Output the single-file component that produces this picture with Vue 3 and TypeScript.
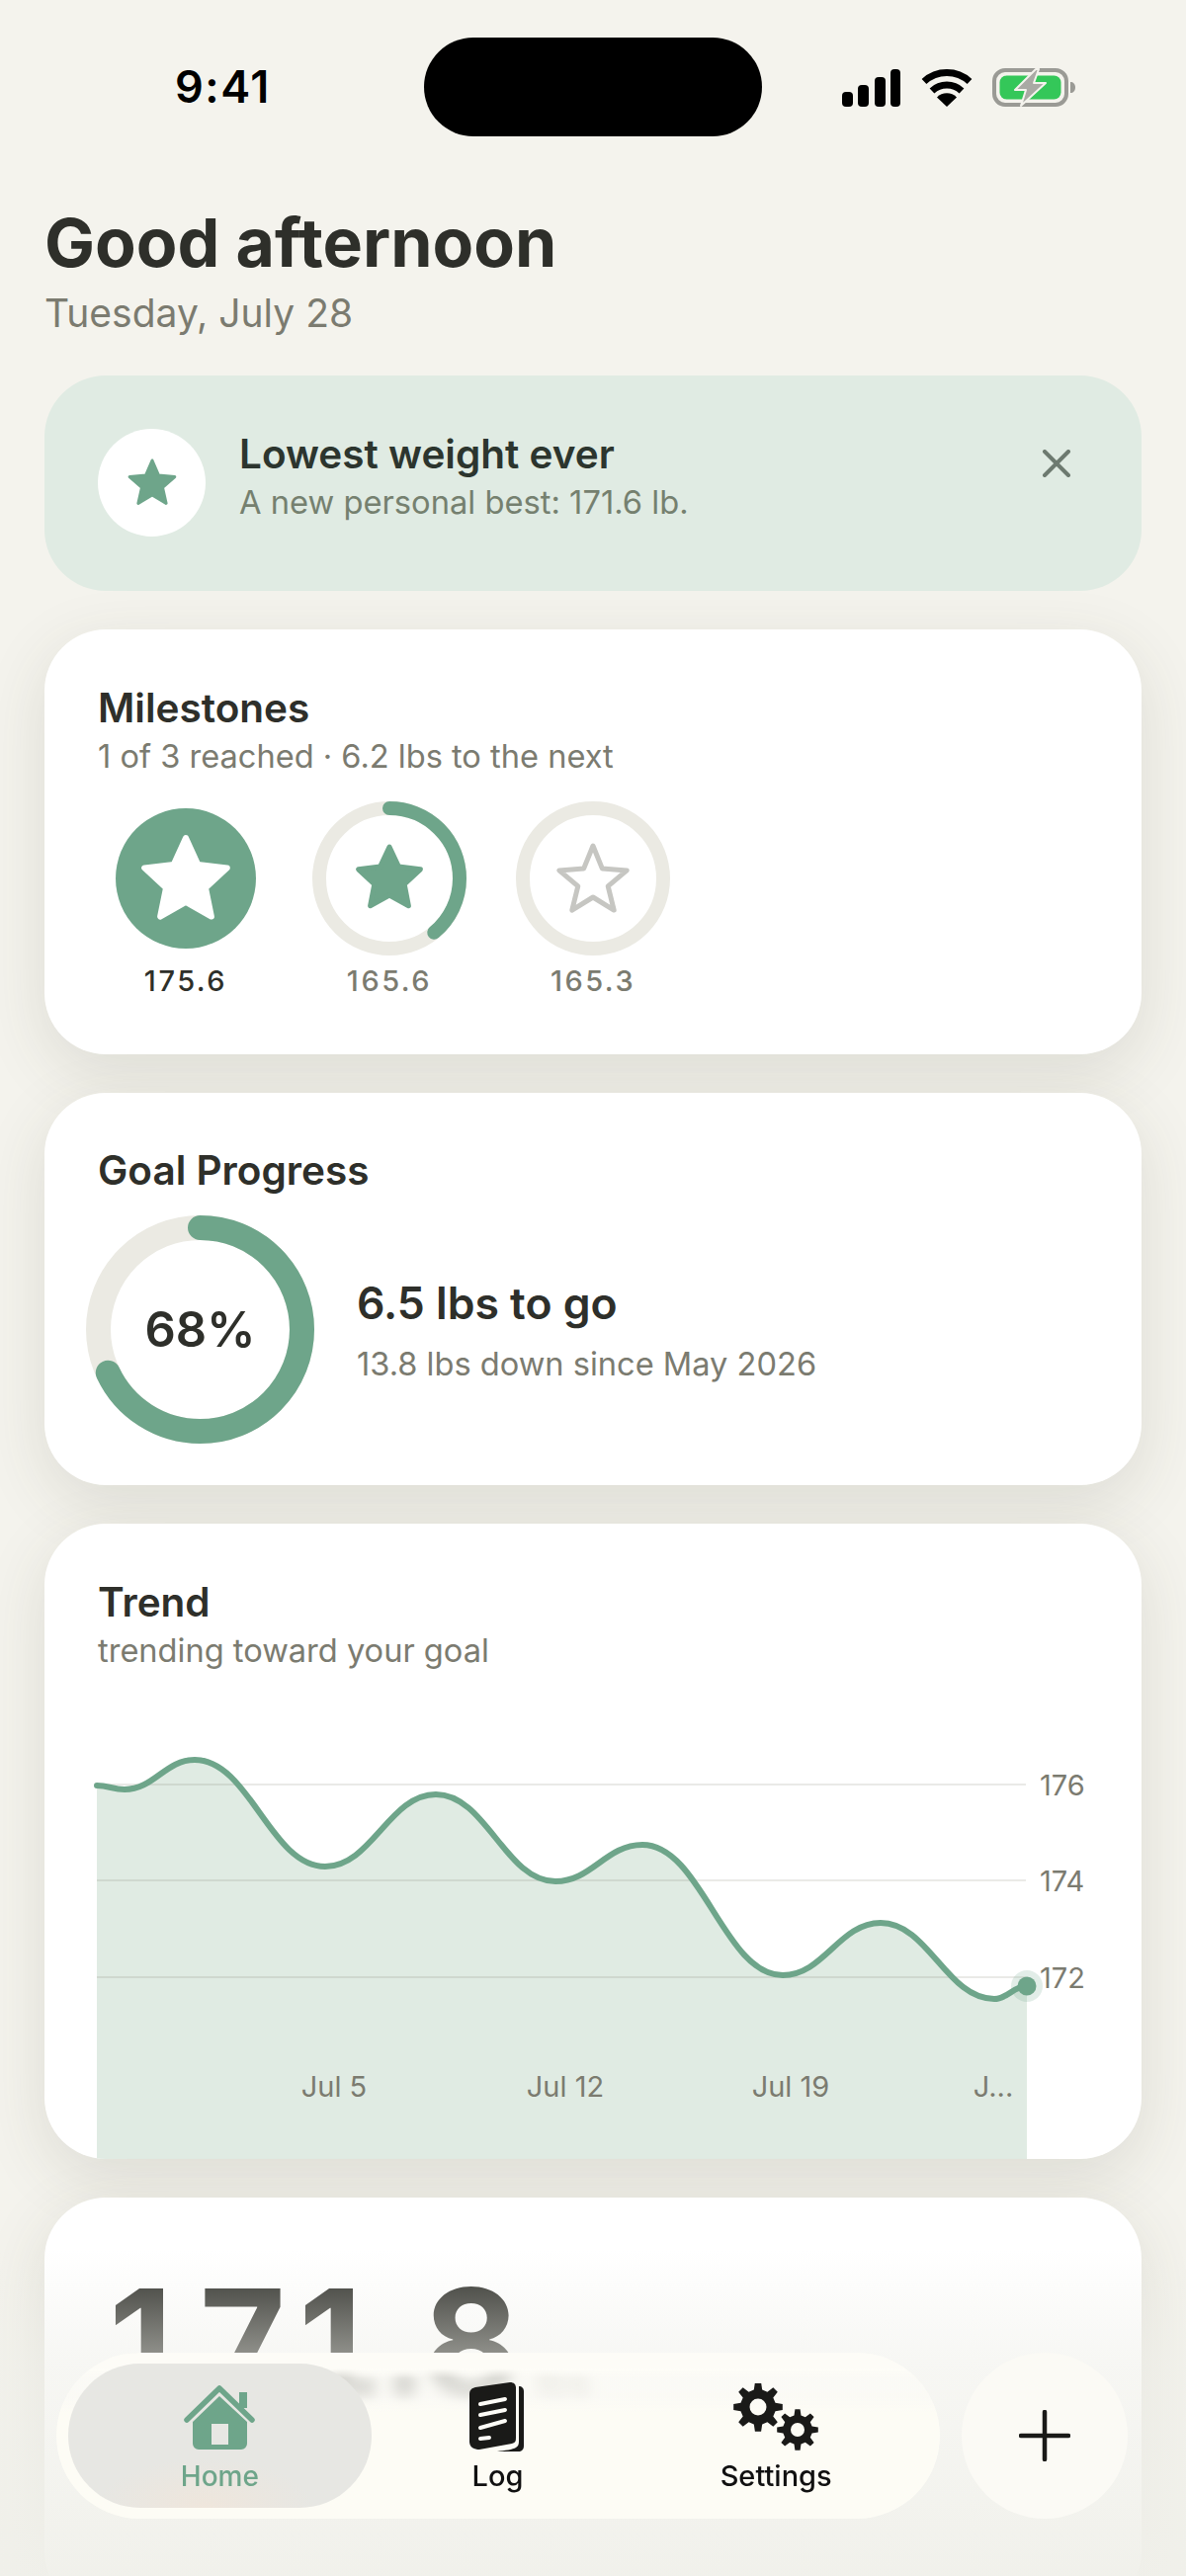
<template>
  <div class="screen">
    <div class="status">
      <span class="time">9:41</span>
      <div class="island"></div>
      <div class="status-icons">
        <svg width="60" height="39" viewBox="0 0 60 39">
          <rect x="0" y="24" width="11" height="15" rx="4" />
          <rect x="16" y="17" width="11" height="22" rx="4" />
          <rect x="33" y="9" width="11" height="30" rx="4" />
          <rect x="49" y="1" width="10" height="38" rx="4" />
        </svg>
        <svg width="52" height="39" viewBox="0 0 52 39">
          <path d="M3 13.5A34 34 0 0 1 49 13.5" fill="none" stroke="#000" stroke-width="7" />
          <path d="M11 23A22 22 0 0 1 41 23" fill="none" stroke="#000" stroke-width="7" />
          <path d="M26 39L16 29.5A14 14 0 0 1 36 29.5Z" />
        </svg>
        <svg width="84" height="39" viewBox="0 0 84 39">
          <rect x="2" y="2" width="73" height="35" rx="11" fill="none" stroke="#9a9a95" stroke-width="4" />
          <rect x="7.5" y="7.5" width="62" height="24" rx="7" fill="#34c759" />
          <path d="M79 14c3 0 5 2 5 5.500s-2 5.500-5 5.500z" fill="#9a9a95" />
          <path d="M44 1L23 22H34L29 38L54 15H42L47 1Z" fill="#a9a9a4" stroke="#f4f3ed" stroke-width="2" stroke-linejoin="round" />
        </svg>
      </div>
    </div>

    <header class="head">
      <h1>Good afternoon</h1>
      <p>Tuesday, July 28</p>
    </header>

    <main class="stack">
      <section class="banner">
        <div class="banner-icon">
          <svg width="52" height="50" viewBox="0 0 52 50">
            <polygon :points="star(26, 26, 24, 11)" fill="#6ea58a" stroke="#6ea58a" stroke-width="3" stroke-linejoin="round" />
          </svg>
        </div>
        <div class="banner-text">
          <h2>Lowest weight ever</h2>
          <p>A new personal best: 171.6 lb.</p>
        </div>
        <svg class="close" width="30" height="28" viewBox="0 0 30 28">
          <path d="M3 2L27 26M27 2L3 26" fill="none" stroke="#6d7a70" stroke-width="4" stroke-linecap="round" />
        </svg>
      </section>

      <section class="card milestones">
        <h3>Milestones</h3>
        <p class="sub">1 of 3 reached · 6.2 lbs to the next</p>
        <div class="badges">
          <div v-for="m in milestones" :key="m.label" class="badge" :class="{ done: m.state === 'done' }">
            <svg width="156" height="156" viewBox="0 0 156 156">
              <template v-if="m.state === 'done'">
                <circle cx="78" cy="78" r="71" fill="#6ea58a" />
                <polygon :points="star(78, 81, 44, 21)" fill="#fff" stroke="#fff" stroke-width="6" stroke-linejoin="round" />
              </template>
              <template v-else>
                <circle cx="78" cy="78" r="71" fill="none" stroke="#ebeae3" stroke-width="14" />
                <template v-if="m.state === 'active'">
                  <circle cx="78" cy="78" r="71" fill="none" stroke="#6ea58a" stroke-width="14" stroke-linecap="round" pathLength="100" stroke-dasharray="39 100" transform="rotate(-90 78 78)" />
                  <polygon :points="star(78, 79, 33, 16)" fill="#6ea58a" stroke="#6ea58a" stroke-width="5" stroke-linejoin="round" />
                </template>
                <polygon v-else :points="star(78, 81, 36, 16)" fill="none" stroke="#c6c6c2" stroke-width="5" stroke-linejoin="round" />
              </template>
            </svg>
            <span>{{ m.label }}</span>
          </div>
        </div>
      </section>

      <section class="card goal">
        <h3>Goal Progress</h3>
        <div class="goal-row">
          <div class="ring">
            <svg width="231" height="231" viewBox="0 0 231 231">
              <circle cx="115.500" cy="115.500" r="103" fill="none" stroke="#ebeae3" stroke-width="25" />
              <circle cx="115.500" cy="115.500" r="103" fill="none" stroke="#6ea58a" stroke-width="25" stroke-linecap="round" pathLength="100" stroke-dasharray="68 100" transform="rotate(-90 115.500 115.500)" />
            </svg>
            <span>68%</span>
          </div>
          <div class="goal-text">
            <strong>6.5 lbs to go</strong>
            <p class="sub">13.8 lbs down since May 2026</p>
          </div>
        </div>
      </section>

      <section class="card trend">
        <div class="trend-head">
          <h3>Trend</h3>
          <p class="sub">trending toward your goal</p>
        </div>
        <svg class="chart" width="1110" height="446" viewBox="45 1740 1110 446">
          <path :d="areaPath" fill="#e0ebe3" />
          <line v-for="t in yTicks" :key="t.label" x1="98" x2="1038" :y1="t.y" :y2="t.y" stroke="#6b6b55" stroke-opacity="0.14" stroke-width="2" />
          <path :d="linePath" fill="none" stroke="#6ea58a" stroke-width="6" stroke-linecap="round" />
          <circle cx="1039" cy="2011" r="16" fill="#6ea58a" fill-opacity="0.2" />
          <circle cx="1039" cy="2011" r="9.500" fill="#6ea58a" />
          <text v-for="t in yTicks" :key="t.label" x="1052" :y="t.y + 11" class="tick">{{ t.label }}</text>
          <text v-for="t in xTicks" :key="t.label" :x="t.x" y="2123" text-anchor="middle" class="tick">{{ t.label }}</text>
        </svg>
      </section>

      <section class="card weight">
        <span class="big">171.8</span><span class="unit">lbs</span>
      </section>
    </main>

    <div class="fade"></div>

    <nav class="dock">
      <div class="tabs">
        <div class="tab home">
          <div class="tab-icon">
            <svg width="74" height="66" viewBox="0 0 74 66">
              <path d="M57 8h8v16h-8z" fill="#6ea58a" />
              <path d="M4 36L37 4L70 36" fill="none" stroke="#6ea58a" stroke-width="5.500" stroke-linecap="round" stroke-linejoin="round" />
              <path fill-rule="evenodd" d="M37 12L65 38V60a6 6 0 0 1-6 6H16a6 6 0 0 1-6-6V38ZM29 40V61H46V40Z" fill="#6ea58a" />
            </svg>
          </div>
          <span>Home</span>
        </div>
        <div class="tab log">
          <div class="tab-icon">
            <svg width="56" height="70" viewBox="0 0 56 70">
              <path d="M50 4c3 0 5 2 5 5V64c0 4-2 6-6 6H28c8-1 16-2 19-4 2-1 3-3 3-6Z" fill="#1a1a18" />
              <path d="M0 12c0-4 2-6 6-7L41 0c4 0 6 2 6 6V56c0 4-1 5-4 6L10 68c-5 0-10-2-10-8Z" fill="#1a1a18" />
              <path d="M11 22L36 17M11 33L36 28M11 46L36 39M11 57L20 56" fill="none" stroke="#fdfcf7" stroke-width="4" stroke-linecap="round" />
            </svg>
          </div>
          <span>Log</span>
        </div>
        <div class="tab settings">
          <div class="tab-icon">
            <svg width="86" height="68" viewBox="0 0 86 68">
              <path :d="gear(25, 24, 25, 18, 8, 8.500)" fill="#1a1a18" fill-rule="evenodd" />
              <path :d="gear(65, 47, 21, 15, 8, 7)" fill="#1a1a18" fill-rule="evenodd" />
            </svg>
          </div>
          <span>Settings</span>
        </div>
      </div>
      <button class="add" type="button">
        <svg width="52" height="52" viewBox="0 0 52 52">
          <path d="M26 2V50M2 26H50" fill="none" stroke="#1a1a18" stroke-width="4.500" stroke-linecap="round" />
        </svg>
      </button>
    </nav>
  </div>
</template>

<script setup lang="ts">
type Milestone = { label: string; state: "done" | "active" | "todo" };

const milestones: Milestone[] = [
  { label: "175.6", state: "done" },
  { label: "165.6", state: "active" },
  { label: "165.3", state: "todo" },
];

const yTicks = [
  { label: "176", y: 1807 },
  { label: "174", y: 1904 },
  { label: "172", y: 2002 },
];

const xTicks = [
  { label: "Jul 5", x: 338 },
  { label: "Jul 12", x: 572 },
  { label: "Jul 19", x: 800 },
  { label: "J...", x: 1005 },
];

// peaks and dips of the weight line
const curve: [number, number][] = [
  [98, 1808], [126, 1812], [197, 1782], [329, 1890], [441, 1817], [562, 1905],
  [650, 1868], [792, 2000], [891, 1947], [1006, 2024], [1039, 2011],
];

function smooth(pts: [number, number][]): string {
  let d = `M${pts[0][0]} ${pts[0][1]}`;
  for (let i = 1; i < pts.length; i++) {
    const [x0, y0] = pts[i - 1];
    const [x1, y1] = pts[i];
    const h = (x1 - x0) * 0.42;
    d += `C${x0 + h} ${y0} ${x1 - h} ${y1} ${x1} ${y1}`;
  }
  return d;
}

const linePath = smooth(curve);
const areaPath = `${linePath}L1039 2186L98 2186Z`;

function star(cx: number, cy: number, outer: number, inner: number): string {
  const out: string[] = [];
  for (let i = 0; i < 10; i++) {
    const r = i % 2 ? inner : outer;
    const a = (Math.PI / 5) * i - Math.PI / 2;
    out.push(`${(cx + r * Math.cos(a)).toFixed(1)},${(cy + r * Math.sin(a)).toFixed(1)}`);
  }
  return out.join(" ");
}

function gear(cx: number, cy: number, outer: number, root: number, teeth: number, hole: number): string {
  const step = (Math.PI * 2) / teeth;
  let d = "";
  for (let i = 0; i < teeth; i++) {
    const a = step * i - Math.PI / 2;
    const corners: [number, number][] = [
      [root, a - step * 0.3],
      [outer, a - step * 0.16],
      [outer, a + step * 0.16],
      [root, a + step * 0.3],
    ];
    for (const [r, t] of corners) {
      d += `${d ? "L" : "M"}${(cx + r * Math.cos(t)).toFixed(1)} ${(cy + r * Math.sin(t)).toFixed(1)}`;
    }
  }
  d += `ZM${cx - hole} ${cy}a${hole} ${hole} 0 1 0 ${hole * 2} 0a${hole} ${hole} 0 1 0 ${-hole * 2} 0Z`;
  return d;
}
</script>

<style>
body {
  background: #f4f3ed;
}
</style>

<style scoped>
* {
  box-sizing: border-box;
}

.screen {
  position: relative;
  width: 1200px;
  height: 2607px;
  overflow: hidden;
  background: #f4f3ed;
  color: #2e2f2a;
  font-family: Inter, "Noto Sans", sans-serif;
}

h1,
h2,
h3,
p {
  margin: 0;
}

.status {
  display: flex;
  align-items: center;
  height: 138px;
  padding: 38px 0 0 177px;
}

.time {
  width: 252px;
  font-size: 45px;
  font-weight: 600;
  letter-spacing: 1.500px;
  line-height: 100px;
  color: #000;
}

.island {
  flex: none;
  width: 342px;
  height: 100px;
  border-radius: 50px;
  background: #000;
}

.status-icons {
  display: flex;
  align-items: center;
  gap: 20px;
  margin-left: 81px;
}

.head {
  padding: 67px 45px 0;
}

.head h1 {
  font-size: 68px;
  font-weight: 700;
  line-height: 80px;
}

.head p {
  margin-top: 9px;
  font-size: 39px;
  line-height: 46px;
  color: #7b7b70;
}

.stack {
  display: flex;
  flex-direction: column;
  gap: 39px;
  padding: 40px 45px 0;
}

.banner {
  display: flex;
  align-items: flex-start;
  gap: 34px;
  height: 218px;
  padding: 54px 54px 0;
  border-radius: 62px;
  background: #e0ebe3;
}

.banner-icon {
  display: flex;
  flex: none;
  align-items: center;
  justify-content: center;
  width: 109px;
  height: 109px;
  border-radius: 50%;
  background: #fff;
}

.banner-text {
  flex: 1;
  margin-top: 3px;
}

.banner-text h2 {
  font-size: 40.5px;
  font-weight: 600;
  line-height: 46px;
  color: #2c352e;
}

.banner-text p {
  margin-top: 5px;
  font-size: 32.7px;
  line-height: 40px;
  color: #75806f;
}

.close {
  margin-top: 21px;
  margin-right: 17px;
}

.card {
  border-radius: 62px;
  background: #fff;
  box-shadow: 0 18px 64px rgba(70, 70, 50, 0.13);
}

.card h3 {
  font-size: 40.5px;
  font-weight: 600;
  line-height: 46px;
}

.sub {
  margin-top: 5px;
  font-size: 32.6px;
  line-height: 40px;
  color: #7b7b70;
}

.milestones {
  height: 430px;
  padding: 57px 54px 0;
}

.badges {
  display: flex;
  gap: 50px;
  margin-top: 26px;
  margin-left: 11px;
}

.badge {
  display: flex;
  flex-direction: column;
  align-items: center;
  font-size: 29px;
  font-weight: 500;
  letter-spacing: 2.500px;
  line-height: 34px;
  color: #7b7b70;
}

.badge svg {
  display: block;
}

.badge span {
  margin-top: 9px;
}

.badge.done {
  color: #2e2f2a;
}

.goal {
  height: 397px;
  padding: 56px 54px 0;
}

.goal-row {
  display: flex;
  align-items: center;
  gap: 43px;
  margin-top: 22px;
  margin-left: -12px;
}

.ring {
  position: relative;
  flex: none;
  width: 231px;
  height: 231px;
}

.ring svg {
  display: block;
}

.ring span {
  position: absolute;
  inset: 0;
  display: flex;
  align-items: center;
  justify-content: center;
  font-size: 49px;
  font-weight: 600;
}

.goal-text strong {
  display: block;
  font-size: 44.5px;
  font-weight: 600;
  line-height: 54px;
}

.goal-text .sub {
  margin-top: 14px;
}

.trend {
  height: 643px;
  overflow: hidden;
}

.trend-head {
  height: 197px;
  padding: 57px 54px 0;
}

.chart {
  display: block;
}

.tick {
  font-family: Inter, "Noto Sans", sans-serif;
  font-size: 29px;
  fill: #7b7b70;
}

.weight {
  height: 420px;
  padding: 60px 56px 0;
}

.big {
  font-size: 150px;
  font-weight: 700;
  letter-spacing: -1px;
  line-height: 174px;
  font-variant-numeric: tabular-nums;
}

.unit {
  margin-left: 18px;
  font-size: 40px;
  color: #7b7b70;
}

.fade {
  position: absolute;
  left: 0;
  right: 0;
  bottom: 0;
  height: 330px;
  background: linear-gradient(rgba(240, 240, 234, 0), rgba(240, 240, 234, 0.55) 35%, rgba(240, 240, 234, 0.95));
  pointer-events: none;
}

.dock {
  position: absolute;
  left: 57px;
  bottom: 58px;
  display: flex;
  gap: 22px;
}

.tabs {
  display: flex;
  width: 894px;
  height: 168px;
  padding: 11px 12px;
  border-radius: 84px;
  background: linear-gradient(#fdfcf7 16px, rgba(253, 252, 247, 0.62) 26px, rgba(253, 252, 247, 0.62) 46px, #fdfcf5 60px);
  backdrop-filter: blur(7px);
}

.tab {
  display: flex;
  flex-direction: column;
  align-items: center;
  padding-top: 19px;
  font-size: 29px;
  font-weight: 500;
  line-height: 34px;
  color: #111;
}

.tab-icon {
  display: flex;
  align-items: center;
  height: 70px;
  margin-bottom: 8px;
}

.tab svg {
  display: block;
}

.home {
  width: 307px;
  border-radius: 73px;
  background: radial-gradient(ellipse 110px 50px at 45% 100%, #efe6dc, rgba(239, 230, 220, 0)), #e7e7e3;
  font-size: 28px;
  color: #6ea58a;
}

.log {
  width: 256px;
}

.settings {
  width: 308px;
}

.add {
  display: flex;
  align-items: center;
  justify-content: center;
  width: 168px;
  height: 168px;
  padding: 0;
  border: 0;
  border-radius: 50%;
  background: #fbfaf5;
}
</style>
